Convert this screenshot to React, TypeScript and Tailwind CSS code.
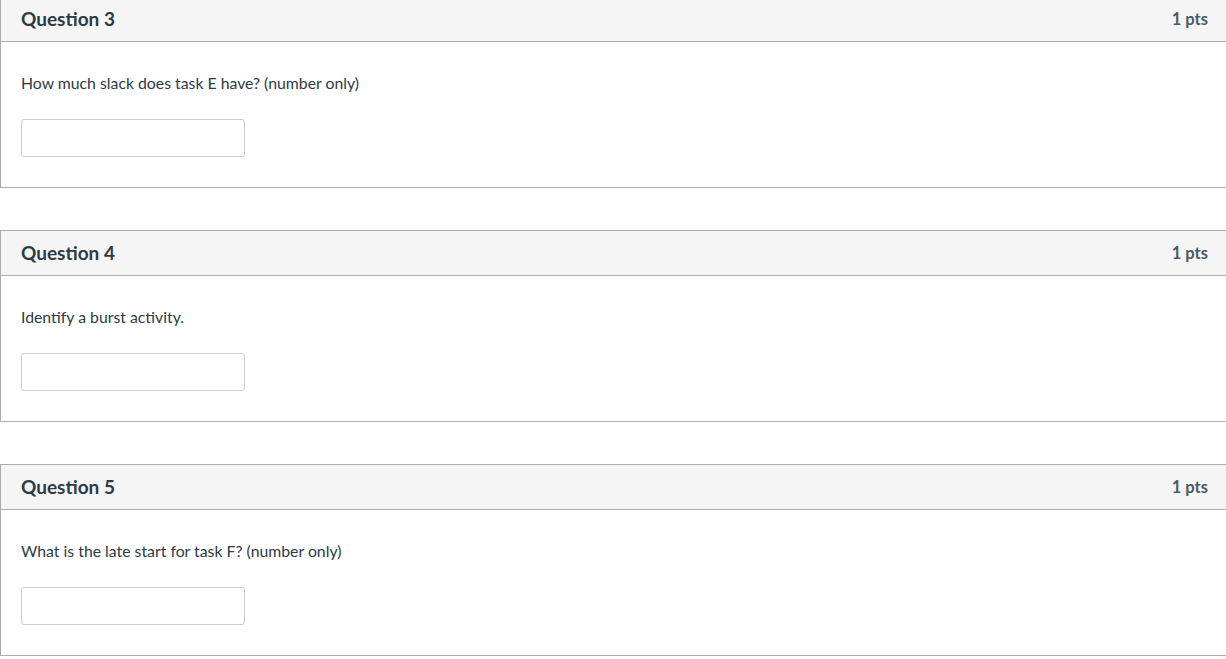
const questions = [
  { id: 3, text: "How much slack does task E have? (number only)" },
  { id: 4, text: "Identify a burst activity." },
  { id: 5, text: "What is the late start for task F? (number only)" },
];

function QuestionCard({ id, text }: { id: number; text: string }) {
  return (
    <div className="border border-r-0 border-[#acacac] bg-white">
      <div className="flex h-[45px] items-center justify-between border-b border-[#acacac] bg-[#f5f5f5] pl-5 pr-[18px]">
        <span className="text-[19px] font-bold text-[#2d3b45]">Question {id}</span>
        <span className="text-[16.5px] font-bold text-[#4a5a66]">1 pts</span>
      </div>
      <div className="px-5 pt-[30px] pb-[30px]">
        <p className="text-[15.8px] leading-[22px] text-[#2d3b45]">{text}</p>
        <input
          type="text"
          className="mt-[25px] block h-[38px] w-[224px] rounded-[3px] border border-[#c7cdd1] bg-white px-2 outline-none"
        />
      </div>
    </div>
  );
}

export default function App() {
  return (
    <div className="h-[659px] overflow-hidden bg-white font-['Lato',sans-serif]">
      <div className="-mt-[4px] flex flex-col gap-[42px]">
        {questions.map((q) => (
          <QuestionCard key={q.id} {...q} />
        ))}
      </div>
    </div>
  );
}
